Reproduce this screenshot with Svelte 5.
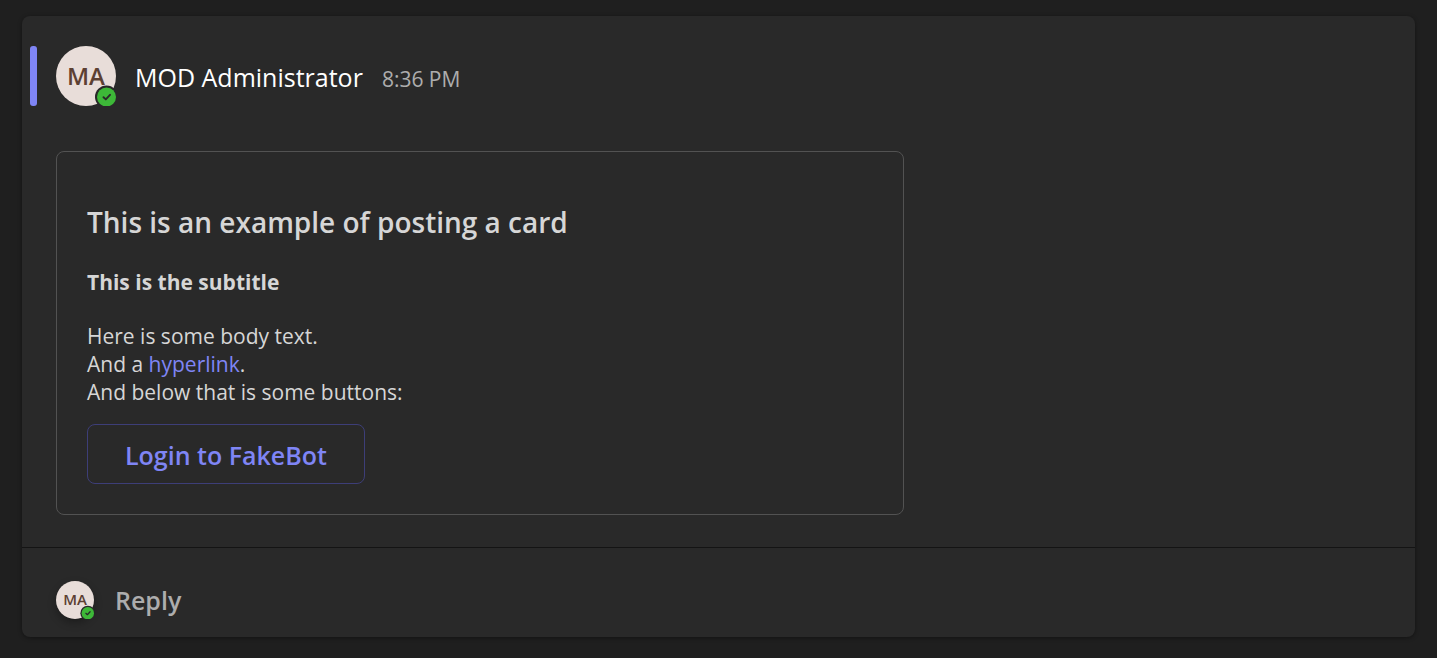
<script>
    let author = "MOD Administrator";
    let initials = "MA";
    let time = "8:36 PM";
</script>

{#snippet avatar(size)}
    <div class="avatar {size}">
        <span>{initials}</span>
        <svg class="status" viewBox="0 0 20 20" role="img" aria-label="Available">
            <circle cx="10.5" cy="11" r="11.5" fill="#292929" />
            <circle cx="10.5" cy="11" r="9.5" fill="#3db838" />
            <path
                d="M7.5 11.2l2.3 2.2 4.2-4.6"
                fill="none"
                stroke="#292929"
                stroke-width="1.9"
                stroke-linecap="round"
                stroke-linejoin="round"
            />
        </svg>
    </div>
{/snippet}

<main>
    <article class="post">
        <div class="message">
            <header>
                {@render avatar("large")}
                <div class="byline">
                    <span class="name">{author}</span>
                    <time>{time}</time>
                </div>
            </header>

            <section class="card">
                <h2>This is an example of posting a card</h2>
                <h3>This is the subtitle</h3>
                <p>
                    Here is some body text.<br />
                    And a <a href="#link">hyperlink</a>.<br />
                    And below that is some buttons:
                </p>
                <button type="button" class="login">Login to FakeBot</button>
            </section>
        </div>

        <footer>
            {@render avatar("small")}
            <button type="button" class="reply">Reply</button>
        </footer>
    </article>
</main>

<style>
    :global(body) {
        margin: 0;
        background-color: #1f1f1f;
    }

    main {
        padding: 16px 22px 21px;
        font-family: "Segoe UI", "Open Sans", "Noto Sans", sans-serif;
        color: #d6d6d6;
    }

    .post {
        background-color: #292929;
        border-radius: 8px;
        box-shadow: 0 1px 4px rgba(0, 0, 0, 0.4);
    }

    .message {
        padding: 30px 34px 32px;
        border-bottom: 1px solid #141414;
    }

    header {
        position: relative;
        display: flex;
        align-items: center;
        gap: 19px;
        height: 60px;
        margin-bottom: 45px;
    }

    header::before {
        content: "";
        position: absolute;
        left: -26px;
        top: 0;
        width: 7px;
        height: 60px;
        border-radius: 3px;
        background-color: #7f85f5;
    }

    .avatar {
        position: relative;
        display: flex;
        align-items: center;
        justify-content: center;
        flex-shrink: 0;
        box-sizing: border-box;
        padding-bottom: 2px;
        border-radius: 50%;
        background-color: #e8ddd9;
        color: #5c4033;
        font-weight: 600;
    }

    .large {
        width: 60px;
        height: 60px;
        font-size: 24px;
    }

    .small {
        width: 38px;
        height: 38px;
        font-size: 15px;
        box-shadow: 0 4px 8px rgba(0, 0, 0, 0.3);
    }

    .status {
        position: absolute;
        right: 0;
        bottom: 0;
        width: 20px;
        height: 20px;
        overflow: visible;
        clip-path: inset(-4px 0 0 -4px);
    }

    .small .status {
        width: 13px;
        height: 13px;
    }

    .byline {
        display: flex;
        align-items: baseline;
        gap: 19px;
        padding-top: 2px;
    }

    .name {
        font-size: 25px;
        color: #fff;
    }

    time {
        font-size: 21px;
        color: #adadad;
    }

    .card {
        box-sizing: border-box;
        max-width: 848px;
        padding: 50px 30px 30px;
        border: 1px solid #525252;
        border-radius: 8px;
    }

    h2 {
        margin: 0 0 26px;
        font-size: 28px;
        line-height: 40px;
        font-weight: 600;
    }

    h3 {
        margin: 0 0 26px;
        font-size: 21px;
        line-height: 28px;
        font-weight: 700;
    }

    p {
        margin: 0 0 18px;
        font-size: 21px;
        line-height: 28px;
    }

    a {
        color: #7f85f5;
        text-decoration: none;
    }

    button {
        font-family: inherit;
        font-weight: 600;
        font-size: 25px;
        line-height: 32px;
        background: none;
        cursor: pointer;
    }

    .login {
        display: block;
        padding: 14px 37px 12px;
        border: 1px solid #3d3e78;
        border-radius: 8px;
        color: #7f85f5;
    }

    footer {
        display: flex;
        align-items: center;
        gap: 21px;
        padding: 33px 34px 18px;
    }

    .reply {
        flex: 1;
        padding: 0;
        border: none;
        color: #adadad;
        text-align: left;
    }
</style>
